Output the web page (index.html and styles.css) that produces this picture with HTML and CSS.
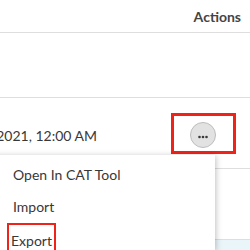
FILE: index.html
```html
<!DOCTYPE html>
<html lang="en">
<head>
  <title>Jobs</title>
  <meta charset="UTF-8">
  <meta name="viewport" content="width=device-width, initial-scale=1">
  <link rel="stylesheet" href="styles.css">
</head>
<body>
  <div class="page">
    <div class="table">
      <div class="row head">
        <div class="cell date"></div>
        <div class="cell actions">Actions</div>
      </div>
      <div class="row empty"></div>
      <div class="row job">
        <div class="cell date"><span>Mar 12, 2021, 12:00 AM</span></div>
        <div class="cell actions">
          <span class="mark">
            <button class="more" type="button">
              <svg width="10" height="4" viewBox="0 0 10 4"><circle cx="1.5" cy="2" r="1.3"/><circle cx="5" cy="2" r="1.3"/><circle cx="8.5" cy="2" r="1.3"/></svg>
            </button>
          </span>
        </div>
      </div>
      <div class="row job"></div>
      <div class="row last active"></div>
    </div>
    <div class="menu">
      <a href="#">Open In CAT Tool</a>
      <a href="#">Import</a>
      <a href="#"><span class="mark-small">Export</span></a>
    </div>
  </div>
</body>
</html>
```
FILE: styles.css
```css
/* page */
body {
  font-family: Lato, "Liberation Sans", Arial, sans-serif;
  font-size: 14px;
  color: #383838;
  margin: 0;
}

.page {
  position: relative;
  height: 250px;
  overflow: hidden;
}

/* table rows */
.row {
  display: flex;
  border-bottom: 1px solid #dedede;
}

.head {
  height: 32px;
  font-weight: bold;
  color: #444;
}

.empty {
  height: 64px;
}

.job {
  height: 70px;
  align-items: center;
}

.last {
  height: 10px;
}

.active {
  background: #eaf5fa;
  border-bottom: none;
}

.cell.date {
  width: 97px;
  display: flex;
  justify-content: flex-end;
  white-space: nowrap;
  padding-top: 4px;
}

.cell.actions {
  flex: 1;
  display: flex;
  justify-content: flex-end;
}

.head .actions {
  padding: 8px 9px 0 0;
}

.job .actions {
  padding-right: 14px;
}

/* red highlight boxes */
.mark {
  display: block;
  border: 3px solid #f0231b;
  padding: 6px 17px 3px 16px;
}

.mark-small {
  display: inline-block;
  border: 2.5px solid #f0231b;
  padding: 0 2px;
  margin-left: -6px;
}

/* more button */
.more {
  display: flex;
  align-items: center;
  justify-content: center;
  width: 26px;
  height: 26px;
  padding: 0;
  border: 1px solid #bdbdbd;
  border-radius: 50%;
  background: #e2e2e2;
  fill: #3a3a3a;
}

.more svg {
  margin-top: 4px;
}

/* dropdown menu */
.menu {
  position: absolute;
  left: -20px;
  top: 155px;
  width: 235px;
  height: 91px;
  padding-top: 4px;
  background: white;
  box-shadow: 1px 1px 6px rgba(0, 0, 0, 0.25);
}

.menu a {
  display: block;
  height: 32px;
  line-height: 32px;
  padding-left: 33px;
  color: #383838;
  text-decoration: none;
}
```
